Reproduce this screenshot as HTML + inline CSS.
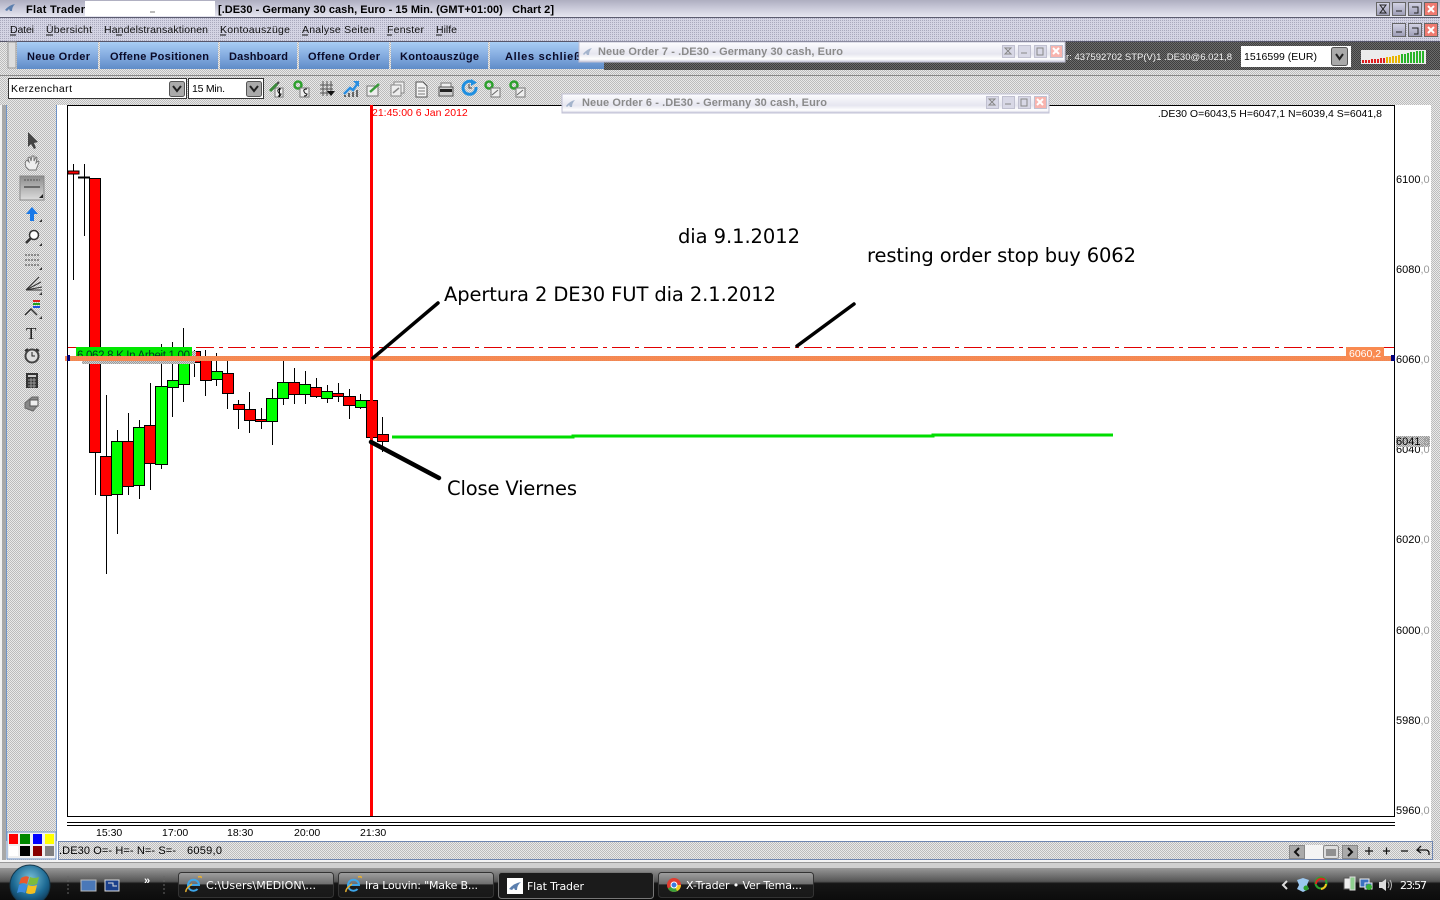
<!DOCTYPE html>
<html><head><meta charset="utf-8"><title>Flat Trader</title>
<style>html,body{margin:0;padding:0;background:#fff;overflow:hidden}svg{display:block}text{font-family:"Liberation Sans",sans-serif;font-size:10px;white-space:pre}
.b{font-weight:bold;font-size:11px}.n{font-family:"DejaVu Sans",sans-serif;font-size:19.5px;fill:#000}.tb{font-family:"DejaVu Sans",sans-serif;font-size:11px;fill:#fff}
.ax{font-size:10.5px}.ay{font-size:11px}.axg{fill:#999}.pop{font-size:11px;fill:#8a8a8a;font-weight:bold}.wk{stroke:#000;stroke-width:1}.bar{stroke:#000;stroke-width:1}.mn{font-size:10.5px;fill:#111}</style></head><body>
<svg width="1440" height="900" viewBox="0 0 1440 900" xmlns="http://www.w3.org/2000/svg">
<defs>
<pattern id="d" width="2" height="2" patternUnits="userSpaceOnUse"><rect width="2" height="2" fill="#e9e9e9"/><rect width="1" height="1" fill="#bcbcbc"/><rect x="1" y="1" width="1" height="1" fill="#bcbcbc"/></pattern>
<pattern id="m" width="2" height="2" patternUnits="userSpaceOnUse"><rect width="2" height="2" fill="#d4d4e4"/><rect width="1" height="1" fill="#a9a9bd"/></pattern>
<pattern id="k" width="2" height="2" patternUnits="userSpaceOnUse"><rect width="2" height="2" fill="#6a6a6a"/><rect width="1" height="1" fill="#3f3f3f"/><rect x="1" y="1" width="1" height="1" fill="#3f3f3f"/></pattern>
<pattern id="o" width="2" height="2" patternUnits="userSpaceOnUse"><rect width="2" height="2" fill="#f98a50"/><rect width="1" height="1" fill="#e8875a"/></pattern>
<pattern id="g" width="2" height="2" patternUnits="userSpaceOnUse"><rect width="2" height="2" fill="#d0d0d0"/><rect width="1" height="1" fill="#999"/><rect x="1" y="1" width="1" height="1" fill="#999"/></pattern>
<linearGradient id="tt" x1="0" y1="0" x2="0" y2="1"><stop offset="0" stop-color="#aeaec0"/><stop offset=".45" stop-color="#c8c8d8"/><stop offset="1" stop-color="#e6e6f0"/></linearGradient>
<linearGradient id="bt" x1="0" y1="0" x2="0" y2="1"><stop offset="0" stop-color="#a8cdf4"/><stop offset=".5" stop-color="#85ace0"/><stop offset="1" stop-color="#5f8cc8"/></linearGradient>
<linearGradient id="tk" x1="0" y1="0" x2="0" y2="1"><stop offset="0" stop-color="#989898"/><stop offset=".42" stop-color="#555"/><stop offset=".48" stop-color="#161616"/><stop offset="1" stop-color="#0c0c0c"/></linearGradient>
<linearGradient id="tb" x1="0" y1="0" x2="0" y2="1"><stop offset="0" stop-color="#a0a0a0"/><stop offset=".45" stop-color="#707070"/><stop offset=".5" stop-color="#1c1c1c"/><stop offset="1" stop-color="#181818"/></linearGradient>
<linearGradient id="wb" x1="0" y1="0" x2="0" y2="1"><stop offset="0" stop-color="#d4d4e6"/><stop offset="1" stop-color="#9c9cb4"/></linearGradient>
<linearGradient id="pp" x1="0" y1="0" x2="0" y2="1"><stop offset="0" stop-color="#fdfdff"/><stop offset=".6" stop-color="#e6e6f0"/><stop offset=".85" stop-color="#fff"/><stop offset="1" stop-color="#c8c8dc"/></linearGradient>
<linearGradient id="hl" x1="0" y1="0" x2="0" y2="1"><stop offset="0" stop-color="#8c8c8c"/><stop offset=".5" stop-color="#b4b4b4"/><stop offset="1" stop-color="#dcdcdc"/></linearGradient>
<radialGradient id="orb" cx=".5" cy=".35" r=".7"><stop offset="0" stop-color="#7ac0d8"/><stop offset=".6" stop-color="#1d6a94"/><stop offset="1" stop-color="#0a2c48"/></radialGradient>
</defs>

<!-- window chrome -->
<rect width="1440" height="900" fill="#fff"/>
<rect width="1440" height="17" fill="url(#tt)"/>
<rect y="17" width="1440" height="1" fill="#5c5c70"/>
<rect y="18" width="1440" height="23" fill="url(#m)"/>
<rect y="41" width="1440" height="1" fill="#55556a"/>
<rect y="42" width="1440" height="28" fill="url(#d)"/>
<rect x="604" y="42" width="836" height="28" fill="url(#k)"/>
<rect y="70" width="1440" height="35" fill="url(#d)"/>
<rect y="75" width="1440" height="1" fill="#888"/>
<rect x="0" y="105" width="7" height="760" fill="#f2f2f2"/>
<rect x="2" y="105" width="4" height="760" fill="#a8a8a8"/>
<rect x="6" y="105" width="1" height="736" fill="#6f94c8"/>
<rect x="7" y="105" width="49" height="755" fill="url(#d)"/>
<rect x="56" y="105" width="1" height="736" fill="#6f94c8"/>
<rect x="1431" y="105" width="9" height="760" fill="url(#d)"/>

<!-- title -->
<path d="M5 10q4-5 10-6-3 3-3 7h-2l-1-2-2 2z" fill="#5c7fae"/>
<text x="26" y="13" class="b" fill="#000" textLength="59" lengthAdjust="spacing">Flat Trader</text>
<rect x="85" y="1" width="130" height="15" fill="#fff"/>
<path d="M150 12h5" stroke="#777"/>
<text x="218" y="13" class="b" fill="#000" textLength="336" lengthAdjust="spacing">[.DE30 - Germany 30 cash, Euro - 15 Min. (GMT+01:00)   Chart 2]</text>

<!-- window buttons -->
<g stroke="#666" fill="url(#wb)"><rect x="1376.500" y="2.500" width="13" height="13"/><rect x="1392.500" y="2.500" width="13" height="13"/><rect x="1408.500" y="2.500" width="13" height="13"/><rect x="1424.500" y="2.500" width="13" height="13" fill="#ef7a70"/>
<rect x="1392.500" y="23.500" width="13" height="13"/><rect x="1408.500" y="23.500" width="13" height="13"/><rect x="1424.500" y="23.500" width="13" height="13" fill="#ef7a70"/></g>
<g stroke="#222" fill="none"><path d="M1380 5h6l-3 4 3 4h-6l3-4z"/><path d="M1396 11h6M1396 32h6"/><path d="M1412 7h6v6h-4M1412 28h6v6h-4"/></g>
<g stroke="#fff" stroke-width="2"><path d="M1428 6l6 6m0-6l-6 6M1428 27l6 6m0-6l-6 6"/></g>

<!-- menu -->
<text x="10" y="33" class="mn" textLength="24" lengthAdjust="spacing">Datei</text><text x="46" y="33" class="mn" textLength="46" lengthAdjust="spacing">Übersicht</text><text x="104" y="33" class="mn" textLength="104" lengthAdjust="spacing">Handelstransaktionen</text><text x="220" y="33" class="mn" textLength="70" lengthAdjust="spacing">Kontoauszüge</text><text x="302" y="33" class="mn" textLength="73" lengthAdjust="spacing">Analyse Seiten</text><text x="387" y="33" class="mn" textLength="37" lengthAdjust="spacing">Fenster</text><text x="436" y="33" class="mn" textLength="21" lengthAdjust="spacing">Hilfe</text>
<g stroke="#111"><path d="M10 35h6M46 35h7M116 35h6M220 35h6M302 35h6M387 35h5M436 35h6"/></g>

<!-- toolbar buttons -->
<rect x="8" y="42" width="8" height="26" fill="#ddd" stroke="#999"/>
<g fill="url(#bt)"><rect x="17" y="42" width="81" height="27"/><rect x="100" y="42" width="118" height="27"/><rect x="220" y="42" width="77" height="27"/><rect x="299" y="42" width="90" height="27"/><rect x="391" y="42" width="97" height="27"/><rect x="490" y="42" width="114" height="27"/></g>
<g fill="#0a0a28">
<text x="27" y="60" class="b" textLength="63" lengthAdjust="spacing">Neue Order</text><text x="110" y="60" class="b" textLength="99" lengthAdjust="spacing">Offene Positionen</text><text x="229" y="60" class="b" textLength="59" lengthAdjust="spacing">Dashboard</text><text x="308" y="60" class="b" textLength="72" lengthAdjust="spacing">Offene Order</text><text x="400" y="60" class="b" textLength="79" lengthAdjust="spacing">Kontoauszüge</text><text x="505" y="60" class="b" textLength="90" lengthAdjust="spacing">Alles schließen</text></g>

<!-- right status -->
<rect x="1064" y="42" width="376" height="28" fill="url(#k)"/>
<text x="1066" y="60" fill="#f2f2f2" style="font-size:9.500px" textLength="166" lengthAdjust="spacing">r: 437592702 STP(V)1 .DE30@6.021,8</text>
<rect x="1241" y="46" width="110" height="21" fill="#fff"/>
<text x="1244" y="60" fill="#000" style="font-size:10.500px">1516599 (EUR)</text>
<rect x="1331.500" y="47.500" width="16" height="18" fill="#aaa" stroke="#555" rx="2"/><path d="M1336 54l3.500 5 3.500-5" stroke="#222" stroke-width="2" fill="none"/>
<rect x="1361" y="50" width="65" height="14" fill="#ececec"/>
<g stroke-width="2">
<path d="M1363 63v-3M1366 63v-3M1369 63v-3M1372 63v-4" stroke="#e02020"/>
<path d="M1375 63v-4M1378 63v-4M1381 63v-5M1384 63v-5" stroke="#e02020"/>
<path d="M1387 63v-6M1390 63v-6M1393 63v-7M1396 63v-7M1399 63v-8" stroke="#e8b400"/>
<path d="M1402 63v-9M1405 63v-9M1408 63v-10M1411 63v-11M1414 63v-11M1417 63v-12M1420 63v-12M1423 63v-12" stroke="#28b428"/></g>

<!-- combos -->
<rect x="8.500" y="78.500" width="178" height="20" fill="#fff" stroke="#333"/>
<text x="11" y="92" fill="#000" style="font-size:10.500px" textLength="61" lengthAdjust="spacing">Kerzenchart</text>
<rect x="169.500" y="81.500" width="15" height="15" fill="#aaa" stroke="#555" rx="2"/><path d="M173 86l4 5 4-5" stroke="#222" stroke-width="2" fill="none"/>
<rect x="188.500" y="78.500" width="75" height="20" fill="#fff" stroke="#333"/>
<text x="192" y="92" fill="#000" style="font-size:10.500px" textLength="33" lengthAdjust="spacing">15 Min.</text>
<rect x="246.500" y="81.500" width="15" height="15" fill="#aaa" stroke="#555" rx="2"/><path d="M250 86l4 5 4-5" stroke="#222" stroke-width="2" fill="none"/>

<!-- toolbar icons -->
<g fill="none" stroke-width="1.500">
<path d="M270 91l7-7" stroke="#3a8a3a" stroke-width="3"/><path d="M277 84l2-2" stroke="#444" stroke-width="2"/><rect x="275" y="88" width="8" height="9" fill="#eee" stroke="#777" stroke-width="1"/><path d="M281 89q-4 0-3 2.500t3 2.500q0 2-3 2M279.500 88v9" stroke="#111" stroke-width="1"/>
<circle cx="298" cy="85" r="3.500" stroke="#2ca02c" stroke-width="2.500"/><rect x="300" y="88" width="9" height="9" fill="#eee" stroke="#777" stroke-width="1"/><path d="M307 89q-4 0-3 2.500t3 2.500q0 2-3 2" stroke="#111" stroke-width="1"/>
<path d="M323 81v15M327 81v15M331 81v12M320 85h13M320 89h13M320 93h9" stroke="#555" stroke-width="1"/><path d="M327 91h8l-4 5z" fill="#111" stroke="none"/>
<path d="M344 94l6-6 3 2 5-7" stroke="#2a8ee0" stroke-width="2.500"/><path d="M353 81h6v6z" fill="#2a8ee0" stroke="none"/><path d="M345 97v-2M349 97v-4M353 97v-5M357 97v-7" stroke="#666" stroke-width="2"/>
<rect x="367" y="86" width="11" height="10" fill="#eee" stroke="#777" stroke-width="1"/><path d="M370 92l9-8" stroke="#3a9a3a" stroke-width="2.500"/>
<rect x="394" y="82" width="10" height="11" fill="#eee" stroke="#888" stroke-width="1"/><rect x="391" y="85" width="10" height="11" fill="#eee" stroke="#888" stroke-width="1"/><path d="M393 93l6-5" stroke="#888"/>
<path d="M416 82h7l4 4v11h-11z" fill="#f4f4f4" stroke="#555" stroke-width="1"/><path d="M418 88h7M418 91h7M418 94h7" stroke="#777" stroke-width="1"/>
<path d="M441 83h10v4h-10z" fill="#eee" stroke="#777" stroke-width="1"/><rect x="439" y="87" width="14" height="9" fill="#cfcfcf" stroke="#555" stroke-width="1"/><rect x="440" y="89" width="12" height="3" fill="#222" stroke="none"/>
<path d="M476 87a6.500 6.500 0 1 1-3.500-5" stroke="#1f8fe0" stroke-width="3"/><path d="M471 79l6 3.500-6 3.500z" fill="#1f8fe0" stroke="none"/><path d="M469 84v4h3" stroke="#444" stroke-width="1"/>
<circle cx="489" cy="85" r="3.500" stroke="#2ca02c" stroke-width="2.500"/><rect x="491" y="88" width="9" height="9" fill="#eee" stroke="#777" stroke-width="1"/><path d="M492 95l6-5" stroke="#666" stroke-width="1"/>
<circle cx="514" cy="85" r="3.500" stroke="#2ca02c" stroke-width="2.500"/><rect x="516" y="88" width="9" height="9" fill="#eee" stroke="#777" stroke-width="1"/><path d="M517 95l6-5" stroke="#666" stroke-width="1"/>
</g>

<!-- chart -->
<rect x="57" y="105" width="1374" height="736" fill="#fff"/>
<rect x="67.500" y="105.500" width="1327" height="711" fill="#fff" stroke="#000"/>
<path d="M67 822.500h1328M67 825.500h1328" stroke="#000"/>

<!-- left tools -->
<path d="M28 132l0 15 3-3 3 5 2-1-2-5 4-1z" fill="#444"/>
<path d="M26 167q-2-5 1-7l2 2-1-4 2-1 1 4 1-5 2 0 0 5 2-4 1 1-1 5 2-2 1 1-3 8h-7z" fill="#eee" stroke="#777"/>
<rect x="20" y="176" width="24" height="24" fill="url(#hl)" stroke="#888"/><path d="M24 187h16" stroke="#222"/><path d="M24 180h16" stroke="#555" stroke-dasharray="2 1"/><path d="M39 198h4v-4z" fill="#222"/>
<path d="M32 207l6 7h-4v7h-4v-7h-4z" fill="#1878e8"/>
<circle cx="34" cy="235" r="4.500" fill="#fff" stroke="#333" stroke-width="1.500"/><path d="M30.500 238.500l-4.500 4.500" stroke="#333" stroke-width="2.500"/>
<path d="M25 255h15M25 260h15M25 265h15" stroke="#444" stroke-dasharray="2 1"/>
<path d="M26 290l13-13M26 290l15-8M26 290l16-3M26 290h16" stroke="#333"/>
<path d="M25 315l6-6 6 6" fill="none" stroke="#333" stroke-width="1.500"/><path d="M33 301h7" stroke="#e02020" stroke-width="2"/><path d="M33 304h7" stroke="#1fa01f" stroke-width="2"/><path d="M33 307h7" stroke="#1f50e0" stroke-width="2"/>
<path d="M39 222h3v-3zM39 246h3v-3zM39 270h3v-3zM39 295h3v-3zM39 319h3v-3z" fill="#333"/>
<text x="26" y="339" style="font-family:'Liberation Serif',serif;font-size:17px" fill="#222">T</text>
<circle cx="32" cy="356" r="6.500" fill="#ddd" stroke="#444" stroke-width="2"/><path d="M32 352v4h3" stroke="#222" fill="none"/><path d="M25 351l3-2M39 351l-3-2" stroke="#333" stroke-width="2"/>
<rect x="26" y="373" width="12" height="15" fill="#333"/><rect x="28" y="375" width="8" height="2" fill="#ccc"/><path d="M28 380h8M28 383h8M28 386h8M31 378v10M34 378v10" stroke="#999"/>
<path d="M25 403l7-6h6v8l-5 6-8-3z" fill="#888" stroke="#666"/><rect x="30" y="400" width="8" height="6" fill="#eee" stroke="#555"/>

<!-- swatches -->
<rect x="7" y="832" width="49" height="27" fill="#f0f0f0" stroke="#6f94c8"/>
<rect x="9" y="834" width="9" height="10" fill="#f00"/><rect x="20" y="834" width="10" height="10" fill="#080"/><rect x="33" y="834" width="9" height="10" fill="#00f"/><rect x="45" y="834" width="9" height="10" fill="#ff0"/>
<rect x="9" y="846" width="9" height="10" fill="#fff"/><rect x="20" y="846" width="10" height="10" fill="#000"/><rect x="33" y="846" width="9" height="10" fill="#800"/><rect x="45" y="846" width="9" height="10" fill="#808080"/>

<!-- candles -->
<g shape-rendering="crispEdges">
<g class="wk">
<path d="M73.500 164V280M84.500 164V236M95.500 452V495M106.500 395V574M117.500 430V534M128.500 413V495M139.500 420V499M150.500 383V490M161.500 344V469M172.500 342V417M183.500 328V402M194.500 350V377M205.500 350V396M216.500 353V386M227.500 360V409M238.500 400V429M249.500 392V433M261.500 408V429M272.500 389V445M283.500 361V405M294.500 368V404M305.500 371V404M316.500 378V398M327.500 385V403M338.500 383V402M349.500 389V419M360.500 394V409M382.500 417V452"/>
</g>
<rect x="68" y="171" width="11" height="3" fill="#f00" stroke="#000" stroke-width=".6"/>
<path d="M78 177.500h12" stroke="#000" stroke-width="2"/>
<g class="bar" fill="#f00">
<rect x="89.500" y="178.500" width="11" height="274"/><rect x="100.500" y="456.500" width="11" height="39"/><rect x="122.500" y="441.500" width="11" height="45"/><rect x="144.500" y="425.500" width="11" height="38"/><rect x="189.500" y="351.500" width="11" height="11"/><rect x="200.500" y="358.500" width="11" height="22"/><rect x="222.500" y="373.500" width="11" height="20"/><rect x="233.500" y="404.500" width="11" height="5"/><rect x="244.500" y="409.500" width="11" height="11"/><rect x="255.500" y="419.500" width="11" height="2"/><rect x="288.500" y="382.500" width="11" height="12"/><rect x="310.500" y="387.500" width="11" height="9"/><rect x="332.500" y="393.500" width="11" height="3"/><rect x="343.500" y="396.500" width="12" height="9"/><rect x="366.500" y="400.500" width="11" height="37"/><rect x="377.500" y="434.500" width="11" height="7"/>
</g>
<g class="bar" fill="#0f0">
<rect x="111.500" y="441.500" width="11" height="53"/><rect x="133.500" y="427.500" width="11" height="58"/><rect x="155.500" y="386.500" width="12" height="78"/><rect x="167.500" y="380.500" width="11" height="7"/><rect x="178.500" y="360.500" width="11" height="24"/><rect x="211.500" y="371.500" width="11" height="8"/><rect x="266.500" y="398.500" width="11" height="23"/><rect x="277.500" y="382.500" width="11" height="16"/><rect x="299.500" y="384.500" width="11" height="10"/><rect x="321.500" y="391.500" width="11" height="7"/><rect x="355.500" y="400.500" width="11" height="7"/>
</g>
</g>

<!-- order line -->
<path d="M68 347.500H1394" stroke="#e00000" stroke-dasharray="18 5 4 5" shape-rendering="crispEdges"/>
<rect x="76" y="347" width="116" height="11" fill="#00e800"/>
<text x="77" y="359" fill="#032" style="font-size:11.500px" textLength="113" lengthAdjust="spacing">6.062,8 K In Arbeit 1,00</text>
<rect x="192" y="351" width="4" height="7" fill="url(#g)"/>
<rect x="82" y="358" width="113" height="6" fill="url(#g)"/>
<rect x="65" y="356" width="1329" height="5" fill="url(#o)"/>
<rect x="67" y="355" width="3" height="6" fill="#00007a"/><rect x="1391" y="355" width="4" height="6" fill="#00007a"/>
<rect x="1346" y="347" width="38" height="13" fill="#f98a50"/>
<text x="1349" y="357" fill="#fff" style="font-size:10.500px">6060,2</text>

<!-- vertical line -->
<rect x="370" y="105" width="3" height="711" fill="#f00"/>
<text x="372" y="116" fill="#f00" style="font-size:10.500px">21:45:00 6 Jan 2012</text>
<text x="1382" y="117" fill="#000" text-anchor="end" style="font-size:10.500px">.DE30 O=6043,5 H=6047,1 N=6039,4 S=6041,8</text>

<!-- annotations -->
<g stroke="#000" stroke-width="3.500" fill="none" stroke-linecap="round">
<path d="M373 358L438 303M797 346L854 304"/>
<path d="M371 442L439 478" stroke-width="4.500"/></g>
<path d="M392 437H573V436H933V435H1113" stroke="#0d0" stroke-width="3" fill="none" shape-rendering="crispEdges"/>
<text x="678" y="243" class="n" textLength="122" lengthAdjust="spacing">dia 9.1.2012</text>
<text x="867" y="262" class="n" textLength="269" lengthAdjust="spacing">resting order stop buy 6062</text>
<text x="444" y="301" class="n" textLength="332" lengthAdjust="spacing">Apertura 2 DE30 FUT dia 2.1.2012</text>
<text x="447" y="495" class="n" textLength="130" lengthAdjust="spacing">Close Viernes</text>

<!-- axis -->
<g fill="#000">
<text x="1396" y="183" class="ay">6100<tspan class="axg">,0</tspan></text><text x="1396" y="273" class="ay">6080<tspan class="axg">,0</tspan></text><text x="1396" y="363" class="ay">6060<tspan class="axg">,0</tspan></text><text x="1396" y="453" class="ay">6040<tspan class="axg">,0</tspan></text><text x="1396" y="543" class="ay">6020<tspan class="axg">,0</tspan></text><text x="1396" y="634" class="ay">6000<tspan class="axg">,0</tspan></text><text x="1396" y="724" class="ay">5980<tspan class="axg">,0</tspan></text><text x="1396" y="814" class="ay">5960<tspan class="axg">,0</tspan></text></g>
<rect x="1396" y="436" width="34" height="11" fill="url(#g)"/>
<text x="1396" y="445" class="ay" fill="#000">6041<tspan class="axg">,8</tspan></text>
<g fill="#000"><text x="96" y="836" class="ax">15:30</text><text x="162" y="836" class="ax">17:00</text><text x="227" y="836" class="ax">18:30</text><text x="294" y="836" class="ax">20:00</text><text x="360" y="836" class="ax">21:30</text></g>

<!-- status bar -->
<rect x="58.500" y="841.500" width="1374" height="18" fill="url(#d)" stroke="#6f86b0"/>
<text x="59" y="854" fill="#000" style="font-size:11px" textLength="117" lengthAdjust="spacing">.DE30 O=- H=- N=- S=-</text>
<text x="187" y="854" fill="#000" style="font-size:11px" textLength="35" lengthAdjust="spacing">6059,0</text>
<rect x="1289.500" y="845.500" width="15" height="13" fill="#aaa" stroke="#888"/><path d="M1299 848l-4 4 4 4" stroke="#111" stroke-width="2" fill="none"/>
<rect x="1305" y="845" width="18" height="14" fill="#f4f4f4"/>
<rect x="1323.500" y="845.500" width="15" height="13" fill="#ddd" stroke="#888" rx="2"/><path d="M1327 849v7M1329 849v7M1331 849v7M1333 849v7M1335 849v7" stroke="#444"/>
<rect x="1342.500" y="845.500" width="15" height="13" fill="#aaa" stroke="#888"/><path d="M1348 848l4 4-4 4" stroke="#111" stroke-width="2" fill="none"/>
<path d="M1365 851h8M1369 847v8M1383 851h7M1386.500 847.500v7M1401 851h7" stroke="#111" stroke-width="1.200"/>
<path d="M1418 850h8a3 3 0 0 1 3 3v2M1421 846l-4 4 4 3" stroke="#111" stroke-width="1.300" fill="none"/>

<!-- taskbar -->
<rect y="860" width="1440" height="2" fill="#f4f4f4"/>
<rect y="862" width="1440" height="1" fill="#999"/>
<rect y="863" width="1440" height="6" fill="#d0d0d0"/>
<rect y="868" width="1440" height="32" fill="url(#tk)"/>
<circle cx="30" cy="885" r="20" fill="url(#orb)" stroke="#15384c"/>
<path d="M21 878q5-3 8-1l-2 7q-4-2-8 0z" fill="#e8582c"/><path d="M30 877q4 2 9 0l-2 7q-5 2-9 0z" fill="#7cbc3c"/><path d="M19 885q4-2 8 0l-2 8q-4-2-8 0z" fill="#3c8ce0"/><path d="M28 885q4 2 9 0l-2 8q-5 2-9 0z" fill="#f4c020"/>
<path d="M68 876v18M164 876v18" stroke="#666" stroke-dasharray="2 2"/>
<rect x="81" y="880" width="15" height="11" fill="#4a78b8" stroke="#bbb"/><rect x="105" y="880" width="14" height="11" fill="#1a3f8c" stroke="#ddd"/><path d="M108 883h5v3h4" stroke="#ddd" fill="none"/>
<text x="144" y="884" fill="#fff" style="font-size:11px;font-weight:bold">»</text>
<g stroke="#333"><rect x="178.500" y="872.500" width="155" height="25" rx="3" fill="url(#tb)"/><rect x="338.500" y="872.500" width="155" height="25" rx="3" fill="url(#tb)"/><rect x="498.500" y="872.500" width="155" height="26" rx="3" fill="#1b1b1b" stroke="#777"/><rect x="658.500" y="872.500" width="155" height="25" rx="3" fill="url(#tb)"/></g>
<g fill="none" stroke="#3ea6ea" stroke-width="2"><path d="M189 885h10a5.500 5.500 0 1 0-1.500 4"/><path d="M349 885h10a5.500 5.500 0 1 0-1.500 4"/></g>
<path d="M186 892q-1-3 6-8M201 878q1-2-3-1M346 892q-1-3 6-8M361 878q1-2-3-1" stroke="#e8b030" stroke-width="1.500" fill="none"/>
<text x="206" y="889" class="tb" textLength="110" lengthAdjust="spacing">C:\Users\MEDION\...</text>
<text x="365" y="889" class="tb" textLength="113" lengthAdjust="spacing">Ira Louvin: "Make B...</text>
<rect x="507" y="878" width="16" height="16" fill="#fff"/><path d="M509 889q5-6 12-7-4 3-4 8h-2l-1-2-2 2z" fill="#5c7fae"/>
<text x="527" y="890" class="tb" textLength="57" lengthAdjust="spacing">Flat Trader</text>
<circle cx="674" cy="885" r="7" fill="#e03c30"/><path d="M674 885l-6 3.500a7 7 0 0 0 6 3.500 7 7 0 0 0 6-3.500z" fill="#3aa03a"/><path d="M674 885h7a7 7 0 0 1-4 6z" fill="#f4c820"/><circle cx="674" cy="885" r="3" fill="#3a7ae0" stroke="#fff"/>
<text x="686" y="889" class="tb" textLength="116" lengthAdjust="spacing">X-Trader • Ver Tema...</text>
<path d="M1287 881l-4 4 4 4" stroke="#ddd" stroke-width="2" fill="none"/>
<path d="M1297 880l6-2 6 2-2 5 2 4-6 3-6-3 2-4z" fill="#9cc8f0"/><circle cx="1306" cy="888" r="2.500" fill="#2ca02c"/>
<circle cx="1321" cy="883" r="5.500" fill="none" stroke="#2ca02c" stroke-width="2"/><path d="M1316 884a5.500 5.500 0 0 1 9-4" stroke="#e02020" stroke-width="2" fill="none"/><path d="M1326 884a5.500 5.500 0 0 1-5 5" stroke="#f4c820" stroke-width="2" fill="none"/>
<rect x="1344" y="878" width="8" height="11" fill="#eee" stroke="#555"/><rect x="1350" y="877" width="5" height="13" fill="#8fd08f" stroke="#ddd"/>
<rect x="1360" y="879" width="9" height="8" fill="#3a70c0" stroke="#eee"/><rect x="1365" y="883" width="7" height="6" fill="#3a70c0" stroke="#eee"/><circle cx="1369" cy="887" r="3" fill="#3ab03a"/>
<path d="M1379 882h3l4-3v12l-4-3h-3z" fill="#ddd"/><path d="M1388 882q2 3 0 6M1390 880q3 5 0 10" stroke="#bbb" fill="none"/>
<text x="1400" y="889" class="tb" style="font-size:11px" textLength="27" lengthAdjust="spacing">23:57</text>

<!-- floating order windows -->
<rect x="579" y="42" width="486" height="20" fill="url(#pp)" stroke="#c0c0d4"/>
<path d="M583 54q4-5 9-6-3 3-3 7h-2l-1-2-2 2z" fill="#a4b4cc"/>
<text x="598" y="55" class="pop" textLength="245" lengthAdjust="spacing">Neue Order 7 - .DE30 - Germany 30 cash, Euro</text>
<g stroke="#c0c0d0" fill="#d8d8e6"><rect x="1002.500" y="45.500" width="12" height="12"/><rect x="1018.500" y="45.500" width="12" height="12"/><rect x="1034.500" y="45.500" width="12" height="12"/><rect x="1050.500" y="45.500" width="12" height="12" fill="#f8b4ae"/></g>
<path d="M1005 48h6l-3 3 3 3h-6l3-3zM1021 53h6M1037 48h6v7h-6z" stroke="#888" fill="none"/><path d="M1053 48l6 6m0-6l-6 6" stroke="#fff" stroke-width="2"/>
<rect x="562" y="94" width="487" height="19" fill="url(#pp)" stroke="#c0c0d4"/>
<path d="M566 106q4-5 9-6-3 3-3 7h-2l-1-2-2 2z" fill="#a4b4cc"/>
<text x="582" y="106" class="pop" textLength="245" lengthAdjust="spacing">Neue Order 6 - .DE30 - Germany 30 cash, Euro</text>
<g stroke="#c0c0d0" fill="#d8d8e6"><rect x="986.500" y="96.500" width="12" height="12"/><rect x="1002.500" y="96.500" width="12" height="12"/><rect x="1018.500" y="96.500" width="12" height="12"/><rect x="1034.500" y="96.500" width="12" height="12" fill="#f8b4ae"/></g>
<path d="M989 99h6l-3 3 3 3h-6l3-3zM1005 104h6M1021 99h6v7h-6z" stroke="#888" fill="none"/><path d="M1037 99l6 6m0-6l-6 6" stroke="#fff" stroke-width="2"/>
</svg>
</body></html>
